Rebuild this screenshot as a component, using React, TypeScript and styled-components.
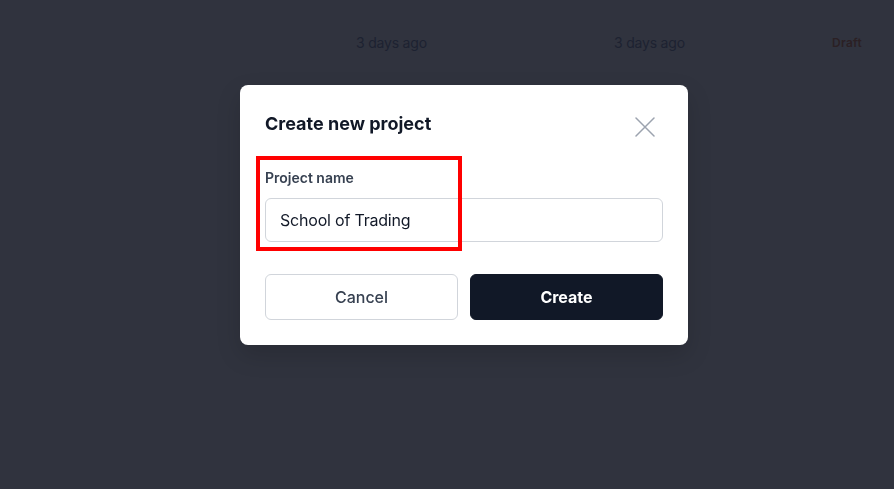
import styled, { createGlobalStyle } from "styled-components";

const GlobalStyle = createGlobalStyle`
  html, body {
    margin: 0;
    padding: 0;
    background: #30333e;
    font-family: Inter, "Noto Sans", sans-serif;
  }
`

const Page = styled.div`
  width: 894px;
  height: 489px;
  background: #30333e;
  overflow: hidden;
`

const DimRow = styled.div`
  display: grid;
  grid-template-columns: 356px 258px 218px auto;
  align-items: center;
  height: 84px;
  font-size: 14px;
  letter-spacing: -0.2px;
  color: #1d2231;
`

const DimBadge = styled.span`
  font-size: 12px;
  font-weight: 600;
  letter-spacing: 0.3px;
  color: #2b2024;
`

const Backdrop = styled.div`
  position: fixed;
  inset: 0;
  display: flex;
  justify-content: center;
  align-items: flex-start;
  padding: 85px 0 0 34px;
`

const Dialog = styled.div`
  width: 448px;
  box-sizing: border-box;
  background: #ffffff;
  border-radius: 8px;
  padding: 24px 25px 25px;
  box-shadow: 0 10px 25px rgba(0, 0, 0, 0.15);
`

const DialogHeader = styled.div`
  display: flex;
  justify-content: space-between;
  align-items: flex-start;
`

const Title = styled.h2`
  margin: 4px 0 0;
  font-size: 18px;
  font-weight: 700;
  line-height: 22px;
  color: #111827;
`

const CloseButton = styled.button`
  display: flex;
  align-items: center;
  justify-content: center;
  width: 24px;
  height: 24px;
  margin: 6px 6px 0 0;
  padding: 0;
  border: none;
  background: none;
  color: #9ca3af;
  cursor: pointer;
`

const Field = styled.div`
  position: relative;
  margin-top: 30px;
`

const Highlight = styled.div`
  position: absolute;
  left: -9px;
  top: -13px;
  width: 206px;
  height: 95px;
  box-sizing: border-box;
  border: 4px solid #ff0000;
  pointer-events: none;
`

const Label = styled.label`
  display: block;
  font-size: 14px;
  font-weight: 600;
  line-height: 17px;
  color: #374151;
  margin-bottom: 12px;
`

const TextInput = styled.input`
  width: 100%;
  height: 44px;
  box-sizing: border-box;
  padding: 0 14px;
  border: 1px solid #d1d5db;
  border-radius: 6px;
  font-family: inherit;
  font-size: 16px;
  letter-spacing: -0.2px;
  color: #111827;
  outline: none;
`

const Actions = styled.div`
  display: grid;
  grid-template-columns: 1fr 1fr;
  gap: 12px;
  margin-top: 32px;
`

const Button = styled.button<{ $primary?: boolean }>`
  height: 46px;
  border-radius: 6px;
  font-family: inherit;
  font-size: 16px;
  font-weight: ${p => (p.$primary ? 700 : 500)};
  cursor: pointer;
  border: 1px solid ${p => (p.$primary ? "#111827" : "#d1d5db")};
  background: ${p => (p.$primary ? "#111827" : "#ffffff")};
  color: ${p => (p.$primary ? "#ffffff" : "#374151")};
`

const App = () => {
    return (
        <Page>
            <GlobalStyle/>
            <DimRow>
                <span/>
                <span>3 days ago</span>
                <span>3 days ago</span>
                <DimBadge>Draft</DimBadge>
            </DimRow>
            <Backdrop>
                <Dialog>
                    <DialogHeader>
                        <Title>Create new project</Title>
                        <CloseButton aria-label="Close">
                            <svg width="22" height="22" viewBox="0 0 22 22" fill="none" stroke="currentColor"
                                 strokeWidth="1.5" strokeLinecap="round">
                                <path d="M2 2l18 18M20 2L2 20"/>
                            </svg>
                        </CloseButton>
                    </DialogHeader>
                    <Field>
                        <Highlight/>
                        <Label>Project name</Label>
                        <TextInput defaultValue="School of Trading"/>
                    </Field>
                    <Actions>
                        <Button>Cancel</Button>
                        <Button $primary>Create</Button>
                    </Actions>
                </Dialog>
            </Backdrop>
        </Page>
    )
}

export default App
